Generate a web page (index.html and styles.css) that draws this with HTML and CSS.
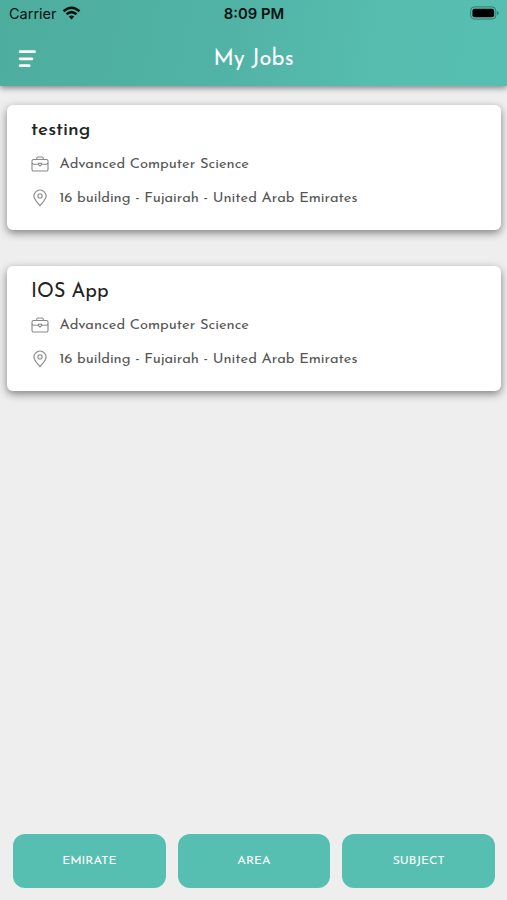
FILE: index.html
```html
<!DOCTYPE html>
<html lang="en">
<head>
<meta charset="utf-8">
<title>My Jobs</title>
<link rel="stylesheet" href="styles.css">
</head>
<body>
<svg class="sprite" aria-hidden="true">
  <symbol id="briefcase" viewBox="0 0 18 18">
    <g fill="none" stroke="currentColor" stroke-width="1.100">
      <rect x="1" y="4.500" width="16" height="11.500" rx="1.500"/>
      <path d="M5.700 4.500V3.500Q5.700 2 7.200 2H10.800Q12.300 2 12.300 3.500V4.500M1 8Q1.500 9.200 3 9.200H7.500M10.500 9.200H15Q16.500 9.200 17 8"/>
      <path d="M7.500 8.300H10.500V9.600L9 10.900 7.500 9.600z"/>
    </g>
  </symbol>
  <symbol id="pin" viewBox="0 0 18 18">
    <g fill="none" stroke="currentColor" stroke-width="1.100">
      <path d="M9 16.800C7 13.900 2.900 10.700 2.900 7.100a6.100 6.100 0 0 1 12.200 0c0 3.600-4.100 6.800-6.100 9.700z"/>
      <circle cx="9" cy="6.900" r="2.100"/>
    </g>
  </symbol>
</svg>
<header class="header">
  <div class="status">
    <div class="carrier"><span>Carrier</span>
      <svg class="wifi" viewBox="0 0 18 14"><g fill="none" stroke="#07120f" stroke-width="2.500"><path d="M1 5.200Q9-1.800 17 5.200"/><path d="M4 8.300Q9 4 14 8.300"/></g><path d="M6.300 10.600Q9 8.500 11.700 10.600L9 13.400z" fill="#07120f"/></svg>
    </div>
    <time>8:09 PM</time>
    <svg class="battery" viewBox="0 0 30 14"><rect x=".7" y=".7" width="26" height="12.600" rx="3.800" fill="none" stroke="#32796d"/><rect x="2.500" y="2.500" width="22.500" height="9" rx="2.200" fill="#000"/><path d="M28 5q1.700.5 1.700 2T28 9z" fill="#32796d"/></svg>
  </div>
  <div class="nav">
    <svg class="menu" viewBox="0 0 18 18"><path d="M2.200 1.700h14.300M2.200 8.800h11.700M2.200 15.700h9" stroke="#fff" stroke-width="2.800" stroke-linecap="round"/></svg>
    <h1>My Jobs</h1>
    <span></span>
  </div>
</header>
<main class="jobs">
  <article class="card">
    <h2 class="lower">testing</h2>
    <p><svg><use href="#briefcase"/></svg><span>Advanced Computer Science</span></p>
    <p><svg><use href="#pin"/></svg><span>16 building - Fujairah - United Arab Emirates</span></p>
  </article>
  <article class="card">
    <h2>IOS App</h2>
    <p><svg><use href="#briefcase"/></svg><span>Advanced Computer Science</span></p>
    <p><svg><use href="#pin"/></svg><span>16 building - Fujairah - United Arab Emirates</span></p>
  </article>
</main>
<footer class="filters">
  <button>EMIRATE</button><button>AREA</button><button>SUBJECT</button>
</footer>
</body>
</html>
```
FILE: styles.css
```css
* { box-sizing: border-box; }
body { margin: 0; height: 900px; display: flex; flex-direction: column; overflow: hidden; background: #eee; font-family: "Josefin Sans", Lato, sans-serif; }
.sprite { display: none; }
.header { height: 86px; background: linear-gradient(100deg, #4dae9f, #51b3a5 45%, #56bdaf 75%, #57bfb1); box-shadow: 0 2px 6px rgba(0,0,0,.45); }
.status { height: 27px; display: grid; grid-template-columns: 1fr auto 1fr; align-items: center; padding: 0 8px 0 9px; font: 14.500px Inter, sans-serif; color: #07120f; }
.status time { font-weight: 600; font-size: 14.800px; }
.carrier { display: flex; align-items: center; gap: 5px; }
.wifi { width: 19px; height: 14px; margin-top: -2px; }
.battery { width: 29px; height: 14px; justify-self: end; margin-top: -1px; }
.nav { height: 59px; display: grid; grid-template-columns: 1fr auto 1fr; align-items: center; padding: 0 18px; }
.menu { width: 18px; height: 18px; margin-top: 5px; }
h1 { margin: 6px 0 0; color: #fff; font-size: 22px; line-height: 26px; font-weight: 400; }
.jobs { flex: 1; padding: 19px 6px 0 7px; }
.card { height: 125px; padding: 13px 24px; margin-bottom: 36px; border-radius: 6px; background: #fff; box-shadow: 0 3px 8px rgba(0,0,0,.46); }
h2 { margin: 0 0 3px; color: #222; font-size: 19.700px; line-height: 26px; font-weight: 400; }
.lower { font-size: 19.200px; font-weight: 500; }
.card p { margin: 0; display: flex; align-items: center; gap: 10.500px; height: 34px; color: #555; font-size: 14.700px; white-space: nowrap; }
.card svg { width: 18px; height: 18px; margin-top: -1px; color: #888; }
.filters { height: 66px; padding: 0 12px 12px 13px; display: grid; grid-template-columns: repeat(3, 1fr); gap: 12px; }
button { border: 0; padding: 0 0 1px; border-radius: 12px; background: #57bfb1; color: #fff; font: 12.300px "Josefin Sans", Lato, sans-serif; }
```
